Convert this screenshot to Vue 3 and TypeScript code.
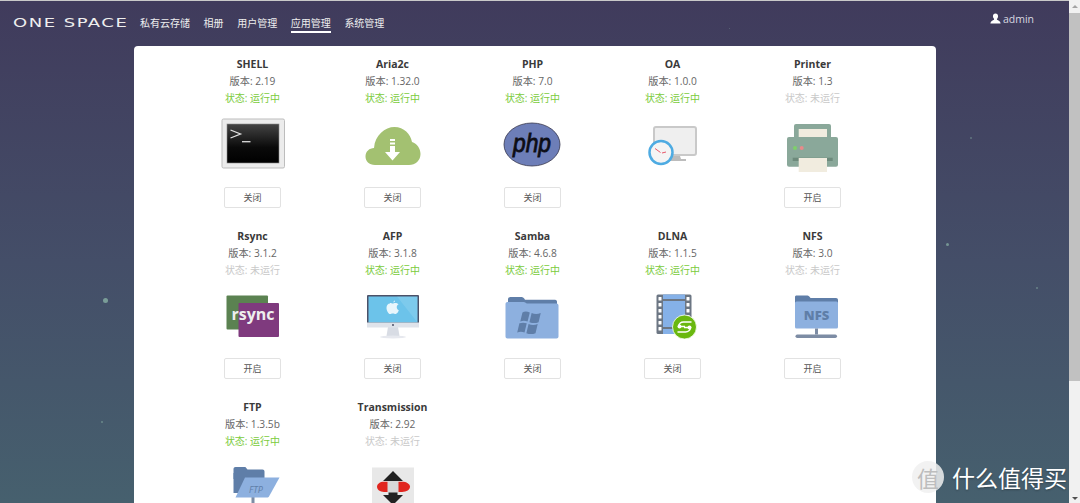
<template>
  <div class="page">
    <main class="desktop">
      <i v-for="(s, i) in stars" :key="i" class="star" :style="{ left: s[0] + 'px', top: s[1] + 'px', width: s[2] + 'px', height: s[2] + 'px', opacity: s[3] }"></i>

      <header class="topbar">
        <div class="logo">ONE SPACE</div>
        <nav class="nav">
          <a v-for="n in navItems" :key="n" class="nav-item" :class="{ active: n === '应用管理' }">{{ n }}</a>
        </nav>
        <div class="user">
          <svg width="11" height="11" viewBox="0 0 12 12">
            <path d="M6 0.5c-1.8 0-2.8 1.3-2.8 3 0 1.2 0.5 2.2 1.2 2.9v0.9C3 8 0.6 8.6 0.4 11.5h11.2C11.4 8.6 9 8 7.6 7.300v-0.9c0.700-0.700 1.200-1.700 1.200-2.900 0-1.700-1-3-2.800-3z" fill="#fff" />
          </svg>
          <span>admin</span>
        </div>
      </header>

      <section class="card">
        <div class="apps">
          <div v-for="app in apps" :key="app.name" class="app">
            <div class="app-name">{{ app.name }}</div>
            <div class="app-line">版本: {{ app.version }}</div>
            <div class="app-line status" :class="app.running ? 'on' : 'off'">状态: {{ app.running ? '运行中' : '未运行' }}</div>

            <svg class="app-icon" width="60" height="60" viewBox="0 0 60 60">
              <template v-if="app.name === 'SHELL'">
                <defs>
                  <linearGradient id="shellBg" x1="0" y1="0" x2="0" y2="1">
                    <stop offset="0" stop-color="#444" />
                    <stop offset="0.6" stop-color="#0a0a0a" />
                    <stop offset="1" stop-color="#000" />
                  </linearGradient>
                </defs>
                <rect x="-1" y="3" width="62.500" height="49" rx="1.500" fill="#ececec" stroke="#bdbdbd" />
                <rect x="4" y="8" width="52" height="39" fill="url(#shellBg)" stroke="#8a8a8a" stroke-width="0.600" />
                <path d="M7.500 14l10 4-10 4" fill="none" stroke="#e4e4e4" stroke-width="1.300" />
                <path d="M19 25.700h8.500" stroke="#ddd" stroke-width="1.300" />
              </template>

              <template v-else-if="app.name === 'Aria2c'">
                <path d="M12 49C6 49 2.500 45 2.500 40.500 2.500 35.500 6.500 32 11 32 12 19 22 11 31.500 11 41 11 47.500 18 49 26 54 27.500 57.500 32.500 57.500 38 57.500 44.500 52.500 49 46 49z" fill="#a3c171" />
                <path d="M27 23h5v2h-5zM27 26.500h5v2h-5zM27 30h5v6h5l-7.500 8.500L22 36h5z" fill="#fff" />
              </template>

              <template v-else-if="app.name === 'PHP'">
                <ellipse cx="29" cy="28.500" rx="28" ry="21.500" fill="#6d7eb8" stroke="#33344a" stroke-width="0.800" />
                <text x="29" y="36" class="php-text" text-anchor="middle" textLength="38" lengthAdjust="spacingAndGlyphs">php</text>
              </template>

              <template v-else-if="app.name === 'OA'">
                <rect x="11" y="11" width="42" height="28" rx="2" fill="#efefef" stroke="#c9c9c9" stroke-width="2" />
                <path d="M28 40h9l1 3h5v2H24v-2h4z" fill="#bcbcbc" />
                <circle cx="18" cy="36.500" r="11.500" fill="#f4f4f4" stroke="#4eabe2" stroke-width="2.500" />
                <path d="M12 32.500l5.500 4M19 37l4-1" stroke="#e8586a" stroke-width="1" />
              </template>

              <template v-else-if="app.name === 'Printer'">
                <rect x="11" y="8" width="37" height="20" rx="2" fill="#8aa89a" />
                <rect x="15.700" y="13" width="28.300" height="8" fill="#f1ecdf" />
                <rect x="4" y="21" width="51" height="29.700" rx="2" fill="#8aa89a" />
                <circle cx="12" cy="32" r="2" fill="#7ed06a" />
                <circle cx="18.700" cy="32" r="2" fill="#e88a8a" />
                <rect x="9.700" y="41.700" width="40" height="3.300" fill="#6d8a7c" />
                <rect x="15.700" y="42" width="28.300" height="14" fill="#f1ecdf" />
              </template>

              <template v-else-if="app.name === 'Rsync'">
                <rect x="3.500" y="8.500" width="41.500" height="34" rx="1" fill="#5b8251" />
                <rect x="15.500" y="16" width="40.500" height="34" rx="1" fill="#7f3a7e" />
                <text x="30" y="33" class="rsync-text" text-anchor="middle">rsync</text>
              </template>

              <template v-else-if="app.name === 'AFP'">
                <path d="M25 40h10l1.500 9H23.500z" fill="#d8dce4" />
                <ellipse cx="30" cy="50" rx="13" ry="1.500" fill="#e6e8ee" />
                <rect x="4" y="8" width="52" height="32" rx="1" fill="#4b5168" />
                <rect x="5.500" y="9.500" width="49" height="26" fill="#6cc3ea" />
                <path d="M34 9.500h20.500v26z" fill="#ffffff" opacity="0.120" />
                <rect x="4" y="35.500" width="52" height="5" fill="#dfe3ea" />
                <circle cx="30" cy="38" r="1" fill="#4b5168" />
                <path d="M30.500 15.500c0.900-0.100 1.600-1 1.500-2-0.900 0.100-1.700 1-1.500 2zM27 16.500c-2 0-3.500 1.700-3.500 4.200 0 3 2 6.300 3.500 6.300 1 0 1.500-0.600 2.800-0.600s1.800 0.600 2.800 0.600c1.400 0 2.700-2.200 3.200-3.700-2.600-1.200-2.700-4.800-0.200-6-1-1.100-2.200-1.400-3.200-1.400-1.200 0-2 0.600-2.700 0.600s-1.500-0.600-2.700-0.600z" fill="#e8f6fc" />
              </template>

              <template v-else-if="app.name === 'Samba'">
                <g transform="translate(-1 0)">
                  <path d="M6 20v-7.500c0-1.400 1-2.500 2.500-2.500h11c1.500 0 2.500 0.800 3.500 2.800h30c1.500 0 2 1 2 2V22z" fill="#5f7ea8" />
                  <path d="M5.500 15h16c2 0 2.500 1.600 3.500 1.600h29.500c1.200 0 2 0.800 2 2v31c0 1.200-0.800 2-2 2H5.500c-1.200 0-2-0.800-2-2V17c0-1.200 0.800-2 2-2z" fill="#8db0df" />
                  <path d="M24 24.500c-2.500-1-4.500-0.800-6 0l-1.800 7.500c2-0.800 4-0.800 6 0zM25.500 25c2.500 1 5 1 7.500 0l-1.800 7.500c-2.500 1-4.500 1-7.500 0zM21.500 33.500c-2-0.800-4-0.800-6 0L13.700 41c2-0.800 4-0.800 6 0zM23 34c2.500 1 5 1 7.500 0l-1.800 7.500c-2.500 1-5 1-7.500 0z" fill="#5f7ea8" transform="translate(-1.500 -4.500) scale(1.220)" />
                </g>
              </template>

              <template v-else-if="app.name === 'DLNA'">
                <rect x="13.500" y="7.500" width="35" height="39.500" rx="1.500" fill="#6c7683" />
                <rect x="20" y="7.500" width="22" height="39.500" fill="#85b1e8" />
                <rect x="20" y="12" width="22" height="2" fill="#6c7683" />
                <rect x="20" y="40" width="22" height="2" fill="#6c7683" />
                <g fill="#fff">
                  <rect v-for="r in 6" :key="'l' + r" x="15.500" :y="4 + r * 6" width="3" height="3.600" rx="0.500" />
                  <rect v-for="r in 6" :key="'r' + r" x="43.500" :y="4 + r * 6" width="3" height="3.600" rx="0.500" />
                </g>
                <circle cx="41.500" cy="40" r="12" fill="#6ab80f" stroke="#fff" stroke-width="0.800" />
                <path d="M35.500 39.500a5 5 0 0 1 5-4.500h8M47.500 40.500a5 5 0 0 1-5 4.500h-8M37 39.500h5M41 40.500h5" fill="none" stroke="#fff" stroke-width="1.600" />
                <circle cx="36.500" cy="39.500" r="2" fill="#fff" />
                <circle cx="46.500" cy="40.500" r="2" fill="#fff" />
              </template>

              <template v-else-if="app.name === 'NFS'">
                <path d="M12 13v-3c0-1 0.700-1.500 1.500-1.500h11c1 0 2 1.200 3 2.500H53c1.200 0 2 0.800 2 2v4H12z" fill="#5f7ea8" />
                <rect x="12" y="14.500" width="43" height="27" rx="1.500" fill="#8db0df" />
                <text x="33.500" y="33" class="nfs-text" text-anchor="middle">NFS</text>
                <rect x="32" y="41.500" width="3" height="6" fill="#7d8ca4" />
                <rect x="12.500" y="47.500" width="41.500" height="3.500" rx="1.700" fill="#7d8ca4" />
              </template>

              <template v-else-if="app.name === 'FTP'">
                <rect x="28.500" y="36" width="3" height="24" fill="#7d8ca4" />
                <path d="M10.500 10c0-1.200 0.800-2 2-2h9.500c1 0 1.500 1.500 2.500 2.500h15c1.200 0 2 0.800 2 2V20H10.500z" fill="#5f7ea8" />
                <path d="M10.500 14h30v20H10.500z" fill="#5f7ea8" />
                <path d="M22 18.500h34.500L46 37.500c-0.500 0.700-1 1-2 1H12.500z" fill="#8db0df" />
                <text x="33" y="33.500" class="ftp-text" text-anchor="middle">FTP</text>
              </template>

              <template v-else-if="app.name === 'Transmission'">
                <rect x="9" y="8.500" width="42" height="51.500" fill="#e8e8e8" />
                <path d="M30 12l10 10h-5.500v14H40L30 46 20 36h5.500V22H20z" fill="#222" />
                <path d="M14 27.800c0-3 3-5.100 7-5.100h18c4.500 0 8 2.100 8 5.100s-3.500 5.200-8 5.200H21c-4 0-7-2.200-7-5.200z" fill="#e1261f" />
                <rect x="24.500" y="22" width="11" height="11.500" fill="#d8d8d8" />
              </template>
            </svg>

            <button class="toggle" :class="{ hidden: app.noToggle }">{{ app.running ? '关闭' : '开启' }}</button>
          </div>
        </div>
      </section>
    </main>

    <aside class="scrollbar">
      <span class="arrow up"></span>
      <span class="thumb"></span>
      <span class="arrow down"></span>
    </aside>

    <div class="watermark">
      <span class="badge">值</span>
      <span class="mark-text">什么值得买</span>
    </div>
  </div>
</template>

<script setup lang="ts">
interface AppItem {
  name: string
  version: string
  running: boolean
  noToggle?: boolean
}

const navItems = ['私有云存储', '相册', '用户管理', '应用管理', '系统管理']

const apps: AppItem[] = [
  { name: 'SHELL', version: '2.19', running: true },
  { name: 'Aria2c', version: '1.32.0', running: true },
  { name: 'PHP', version: '7.0', running: true },
  { name: 'OA', version: '1.0.0', running: true, noToggle: true },
  { name: 'Printer', version: '1.3', running: false },
  { name: 'Rsync', version: '3.1.2', running: false },
  { name: 'AFP', version: '3.1.8', running: true },
  { name: 'Samba', version: '4.6.8', running: true },
  { name: 'DLNA', version: '1.1.5', running: true },
  { name: 'NFS', version: '3.0', running: false },
  // last row's buttons sit below the fold
  { name: 'FTP', version: '1.3.5b', running: true, noToggle: true },
  { name: 'Transmission', version: '2.92', running: false, noToggle: true }
]

// x, y, size, opacity
const stars: number[][] = [
  [103, 297, 5, 0.6],
  [101, 420, 2, 0.4],
  [970, 136, 2, 0.35],
  [946, 242, 3, 0.55],
  [1036, 286, 2, 0.4],
  [729, 27, 1, 0.3]
]
</script>

<style scoped>
.page {
  position: relative;
  display: flex;
  height: 503px;
  overflow: hidden;
  font-family: "Open Sans", "Noto Sans CJK SC", sans-serif;
}

.desktop {
  position: relative;
  flex: 1;
  min-width: 0;
  border-top: 1px solid #c9c9c9;
  background: linear-gradient(180deg, #403b5c 0%, #444e68 52%, #46606e 100%);
}

.star {
  position: absolute;
  border-radius: 50%;
  background: #9fd0b8;
}

.topbar {
  position: relative;
  display: flex;
  align-items: center;
  height: 45px;
  padding: 0 35px 0 13px;
  color: #fff;
}

.logo {
  width: 127px;
  font-family: "DejaVu Sans", sans-serif;
  font-size: 12px;
  letter-spacing: 1px;
  white-space: nowrap;
  color: #eee;
  margin-top: -2px;
  transform: scaleX(1.500);
  transform-origin: left center;
}

.nav {
  display: flex;
  gap: 13.600px;
  margin-top: -1px;
}

.nav-item {
  position: relative;
  font-size: 10px;
  line-height: 16px;
  color: #eee;
}

.nav-item.active::after {
  content: "";
  position: absolute;
  left: 0;
  right: 0;
  bottom: -2px;
  height: 2px;
  background: #fff;
}

.user {
  display: flex;
  align-items: center;
  gap: 2px;
  margin-left: auto;
  margin-top: -10px;
  font-size: 10.500px;
  color: #d8d8e0;
}

.card {
  position: relative;
  width: 802px;
  height: 600px;
  margin: 0 auto;
  padding-top: 10px;
  box-sizing: border-box;
  background: #fff;
  border-radius: 4px;
}

.apps {
  display: grid;
  grid-template-columns: repeat(5, 140px);
  row-gap: 20px;
  padding-left: 49px;
}

.app {
  display: flex;
  flex-direction: column;
  align-items: center;
}

.app-name {
  font-size: 10.500px;
  line-height: 17px;
  font-weight: 700;
  color: #3a3a3a;
}

.app-line {
  font-size: 10.200px;
  line-height: 17px;
  color: #666;
}

.app-line.status {
  font-size: 10px;
}

.app-line.on {
  color: #7bcb3c;
}

.app-line.off {
  color: #c9c9c9;
}

.app-icon {
  display: block;
  margin-top: 8.500px;
  overflow: visible;
}

.php-text {
  font-family: "Liberation Sans", sans-serif;
  font-size: 26px;
  font-style: italic;
  fill: #0c0c14;
  stroke: #0c0c14;
  stroke-width: 0.800;
}

.rsync-text {
  font-family: "Open Sans", sans-serif;
  font-size: 16px;
  font-weight: 700;
  fill: #eee;
}

.nfs-text {
  font-family: "Open Sans", sans-serif;
  font-size: 13px;
  font-weight: 800;
  fill: #5f7ea8;
}

.ftp-text {
  font-family: "Open Sans", sans-serif;
  font-size: 9px;
  font-style: italic;
  fill: #5f7ea8;
}

.toggle {
  width: 57px;
  height: 21px;
  margin-top: 11px;
  padding: 0;
  border: 1px solid #e2e2e2;
  border-radius: 2px;
  background: #fff;
  font-family: inherit;
  font-size: 9px;
  color: #555;
}

.toggle.hidden {
  visibility: hidden;
}

.scrollbar {
  display: flex;
  flex-direction: column;
  align-items: center;
  flex: none;
  width: 11px;
  padding-top: 2px;
  box-sizing: border-box;
  background: #f1f1f1;
}

.arrow {
  flex: none;
  width: 0;
  height: 0;
  margin: 3px 0;
  border-left: 3px solid transparent;
  border-right: 3px solid transparent;
}

.arrow.up {
  border-bottom: 3px solid #a3a3a3;
}

.arrow.down {
  margin-top: auto;
  border-top: 3px solid #505050;
}

.thumb {
  flex: none;
  width: 100%;
  height: 368px;
  margin-top: 2px;
  background: #c1c1c1;
}

.watermark {
  position: absolute;
  left: 912px;
  top: 461px;
  display: flex;
  align-items: center;
  gap: 8px;
}

.badge {
  display: flex;
  align-items: center;
  justify-content: center;
  width: 32px;
  height: 32px;
  border-radius: 50%;
  background: rgba(240, 240, 240, 0.85);
  font-family: "Noto Sans CJK SC", sans-serif;
  font-size: 22px;
  color: #bdbdbd;
}

.mark-text {
  font-family: "Noto Sans CJK SC", sans-serif;
  font-size: 23px;
  line-height: 32px;
  color: #fff;
  text-shadow: 0 1px 2px rgba(0, 0, 0, 0.3);
}
</style>

<style>
html,
body {
  margin: 0;
  overflow: hidden;
}
</style>
